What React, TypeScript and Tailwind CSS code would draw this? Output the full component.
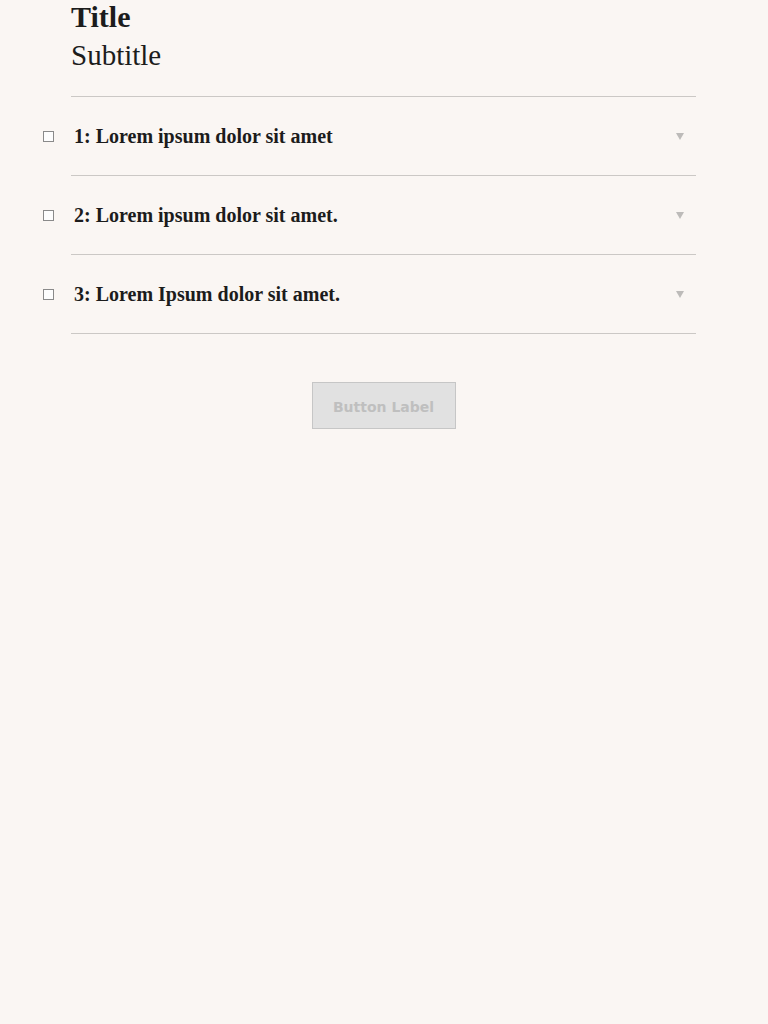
import React from "react";

const items = [
  "1: Lorem ipsum dolor sit amet",
  "2: Lorem ipsum dolor sit amet.",
  "3: Lorem Ipsum dolor sit amet.",
];

export default function App() {
  return (
    <div className="min-h-[1024px] w-full bg-[#faf6f3] text-[#1c1c1c]" style={{ fontFamily: '"Liberation Serif", "DejaVu Serif", serif' }}>
      <div className="ml-[71px] w-[625px]">
        <h1 className="pt-[1px] text-[30px] font-bold leading-[32px]">Title</h1>
        <h2 className="mt-[6px] text-[29px] leading-[32px]">Subtitle</h2>
        <div className="mt-[25px] border-t border-[#cbc8c5]">
          {items.map((t) => (
            <div key={t} className="flex h-[79px] items-center border-b border-[#cbc8c5]">
              <span className="-ml-[28px] mr-[20px] block h-[11px] w-[11px] border border-[#8a8a8a] bg-[#fdfdfd]" />
              <span className="flex-1 text-[20px] font-bold leading-[24px]">{t}</span>
              <svg width="8" height="7" viewBox="0 0 8 7" className="mr-[12px]">
                <polygon points="0,0 8,0 4,7" fill="#bdbbb9" />
              </svg>
            </div>
          ))}
        </div>
        <div className="mt-[48px] flex justify-center">
          <button className="h-[47px] w-[144px] border border-[#c6c6c6] bg-[#e1e1e1] pt-[3px] text-[14px] font-bold text-[#bfbfbf]" style={{ fontFamily: '"DejaVu Sans", sans-serif' }}>
            Button Label
          </button>
        </div>
      </div>
    </div>
  );
}
